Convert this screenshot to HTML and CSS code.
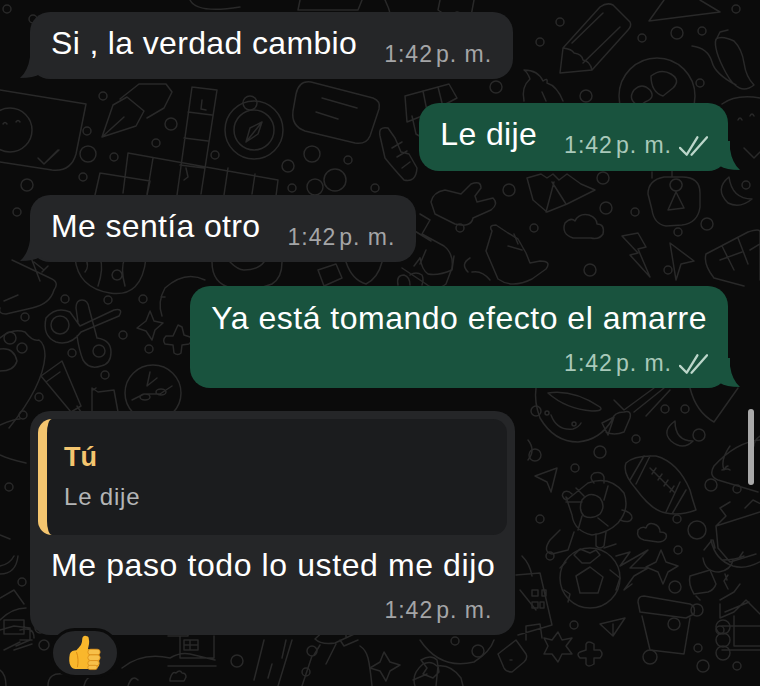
FILE: index.html
```html
<!DOCTYPE html>
<html lang="es">
<head>
    <meta charset="UTF-8">
    <meta name="viewport" content="width=device-width, initial-scale=1.0">
    <title>Chat</title>
    <link rel="stylesheet" href="styles.css">
</head>
<body>
    <div class="chat">
        <!-- wallpaper doodles -->
        <svg class="wall" viewBox="0 0 760 686" aria-hidden="true">
            <g class="dots">
                <circle cx="7" cy="9" r="4"/><circle cx="33" cy="19" r="4"/><circle cx="103" cy="96" r="4"/><circle cx="87" cy="131" r="4"/>
                <circle cx="171" cy="124" r="6"/><circle cx="156" cy="143" r="4"/><circle cx="88" cy="154" r="8"/><circle cx="114" cy="157" r="4"/>
                <circle cx="83" cy="177" r="4"/><circle cx="27" cy="185" r="6"/><circle cx="17" cy="212" r="4"/><circle cx="215" cy="155" r="4"/>
                <circle cx="312" cy="154" r="8"/><circle cx="288" cy="166" r="6"/><circle cx="348" cy="160" r="4"/><circle cx="335" cy="180" r="11"/>
                <circle cx="292" cy="188" r="4"/><circle cx="315" cy="187" r="8"/><circle cx="375" cy="188" r="4"/><circle cx="560" cy="22" r="4"/>
                <circle cx="540" cy="42" r="4"/><circle cx="642" cy="38" r="4"/><circle cx="677" cy="33" r="6"/><circle cx="702" cy="31" r="4"/>
                <circle cx="736" cy="9" r="4"/><circle cx="700" cy="83" r="4"/><circle cx="496" cy="87" r="6"/><circle cx="586" cy="96" r="6"/>
                <circle cx="509" cy="190" r="6"/><circle cx="603" cy="178" r="6"/><circle cx="606" cy="208" r="6"/><circle cx="635" cy="212" r="4"/>
                <circle cx="460" cy="228" r="4"/><circle cx="534" cy="228" r="4"/><circle cx="590" cy="270" r="6"/><circle cx="668" cy="270" r="4"/>
                <circle cx="707" cy="224" r="6"/><circle cx="678" cy="232" r="4"/><circle cx="746" cy="185" r="4"/><circle cx="65" cy="299" r="4"/>
                <circle cx="108" cy="300" r="4"/><circle cx="143" cy="299" r="4"/><circle cx="25" cy="317" r="4"/><circle cx="123" cy="335" r="4"/>
                <circle cx="72" cy="353" r="4"/><circle cx="149" cy="349" r="4"/><circle cx="105" cy="375" r="4"/><circle cx="39" cy="397" r="4"/>
                <circle cx="23" cy="415" r="4"/><circle cx="9" cy="487" r="4"/><circle cx="22" cy="582" r="4"/><circle cx="536" cy="411" r="5"/>
                <circle cx="665" cy="409" r="4"/><circle cx="685" cy="409" r="4"/><circle cx="636" cy="439" r="4"/><circle cx="699" cy="435" r="6"/>
                <circle cx="535" cy="455" r="6"/><circle cx="600" cy="452" r="6"/><circle cx="575" cy="468" r="4"/><circle cx="711" cy="485" r="6"/>
                <circle cx="737" cy="489" r="4"/><circle cx="540" cy="519" r="4"/><circle cx="677" cy="519" r="4"/><circle cx="697" cy="530" r="9"/>
                <circle cx="678" cy="550" r="4"/><circle cx="550" cy="556" r="4"/>
                <circle cx="675" cy="587" r="6"/><circle cx="697" cy="610" r="6"/><circle cx="674" cy="624" r="6"/><circle cx="698" cy="648" r="4"/>
                <circle cx="650" cy="657" r="7"/><circle cx="574" cy="625" r="4"/><circle cx="720" cy="630" r="4"/>
                <circle cx="737" cy="666" r="4"/><circle cx="703" cy="666" r="6"/><circle cx="237" cy="661" r="6"/><circle cx="312" cy="651" r="5"/>
                <circle cx="306" cy="672" r="4"/><circle cx="478" cy="651" r="6"/><circle cx="455" cy="641" r="4"/>
            </g>
            <g class="lines">
                <!-- pen nib -->
                <path d="M102 137l11-32 14-8 17 14-8 15zM102 137l22-20M120 99l19-15 27 0 6 8-8 16-17 10"/>
                <!-- crossword -->
                <path d="M192 87l25 3-16 104M192 87l-15 108M188 112l24 3M184 138l24 3M180 165l24 3M128 153l150 27-2 16M128 153l-5 40M153 158l-6 36M228 168l-4 27M255 174l-3 20M100 173l50 8-3 14M100 173l-5 22"/>
                <path d="M202 100l-1 9 5 1M186 168l2 9-4 3"/>
                <!-- compass -->
                <circle cx="254" cy="130" r="29"/><circle cx="254" cy="130" r="20"/><circle cx="250" cy="103" r="7"/>
                <path d="M262 122l-16 20 4-14zM262 122l-4 12-12 8"/>
                <!-- note -->
                <path d="M311 82l62 16q8 3 6 11l-9 27q-4 9-15 7l-50-12q-14-5-12-20l3-17q3-14 15-12zM322 98l35 10M316 112l22 7"/>
                <!-- smiley in jar -->
                <path d="M0 90l86 14-10 50q-5 18-24 16l-52-8"/>
                <circle cx="10" cy="130" r="22"/><path d="M16 122q2-3 4 0M3 124q2-3 4 0M38 158l6 6 14-14M44 164l15-14"/>
                <!-- top scraps -->
                <path d="M190 0q7 14 50 7M300 0l-2 10h60l4-10M385 0q15 30 0 64M440 0l-2 10 9 6 10-4 14 4 3-16"/>
                <path d="M649 21l71-9-20-12M649 21l15-21"/>
                <!-- pencil -->
                <path d="M560 73l3-25 37-41q7-5 13-2l17 17q2 4-2 8l-36 40zM572 43l31-30M583 63l37-36M563 48q9 1 11 5 8 1 9 7 7 1 9 10"/>
                <!-- chili -->
                <path d="M716 39q-3 10 10 34t28 12q-8-8-10-22t-10-22q-12-6-18-2zM692 46q16 2 20 16 3 12 24 23M716 40l4-8 8-2"/>
                <!-- heart smiley -->
                <circle cx="657" cy="96" r="38"/><path d="M634 90q8-8 16 0 6 8-5 12l-6 4q-12-6-5-16zM651 76q10-8 20-2 10 6 2 14l-10 8q-12-4-12-20z"/>
                <!-- flame -->
                <path d="M524 101q-3-14 6-22-2-6-6-9 14 0 19 11 5-4 4 2 10 3 16 18M542 92l4 9"/>
                <!-- grid stand -->
                <path d="M405 96l44-12 8 14-30 16-20 8zM423 91l4 20M438 87l4 16M412 116l4 18 10 6 6-30"/>
                <!-- shaka hands -->
                <path d="M388 128q-10-2-8 8l5 22q8 10 19 22 12 3 13-12l-8-14-8-2-6-14zM392 148l10-6M397 157l10-6M402 168l8-6"/>
                <path d="M445 190q-12 2-14 12l4 12 20 10q16 4 18-6l18-8q8-6 2-12l-16 4-2-6 6-8q0-8-10-4l-10 10z"/>
                <path d="M496 225q-8 0-4 6l-6 20 12 28q14 10 34 0l14-10q6-8-6-8l-10 2-4-10-8-14-10-6z"/>
                <path d="M514 234l4 10M508 246l14 4"/>
                <!-- corn -->
                <path d="M527 178l6 22 14 12 20-8 28-14-14-6-14-10-8 6-6-6-6 4-6-4zM546 212l8-30M566 204l-14-22"/>
                <!-- lock -->
                <path d="M664 177h18q18 0 18 16v14q-2 16-18 18l-16 1q-12-2-14-16l-4-16q0-14 16-17zM656 168l16 2M676 191a6 6 0 1 1 0.1 0M668 210l8-18 8 16zM652 172v6M672 170v7"/>
                <path d="M729 177q-15 12-1 26 12 6 24-4-20 0-23-22z"/>
                <!-- bottle -->
                <path d="M420 214l10 6-8 14 22 12q10 8 8 22l-6 16q-10 8-20 0l-24-16M405 225l26 16M426 250l-6 14M420 258l-6 8"/>
                <!-- cloud -->
                <path d="M573 238q-12-4-8-15 6-6 10-2 4-8 14-6 8 3 8 9 8 0 6 10-4 6-12 4z"/>
                <!-- lightning -->
                <path d="M622 236l16-3 8 14-8 2 12 28-20-22 8-2z"/>
                <!-- arrow -->
                <path d="M670 243l24 18-13 3-5 16z"/>
                <!-- window -->
                <path d="M706 254l42-22q12-4 12 0v48M706 254q-3 10 8 24l30 8M722 246l12 24M738 238l10 26M720 260l22-8M750 250l10-6"/>
                <!-- smiley behind bubble -->
                <path d="M722 104q14-10 38-6M738 120q2-4 4 0M750 116q2-4 4 0M744 148l10 10 6-6"/>
                <!-- below first row -->
                <path d="M12 260l38 18q10 4 4 12-4 14-22 18l-26 6q-8 0-6-6M30 255l10 26M18 295l-14 6M48 266l-6 6M34 262l10 8"/>
                <path d="M75 258q3 30 35 35t36-35M85 258q5 8 0 14M100 258q4 10-2 28M125 258q-5 10 0 28M117 270a5 5 0 1 0 0.1 0"/>
                <!-- scissors -->
                <circle cx="60" cy="325" r="9"/><path d="M46 318q10-12 24-6l10 14 34-16q10-2 5 6l-38 16q-10 14-25 10-14-6-10-24zM78 322l-2-14q0-8 6-8 6 0 7 8l8 30q14 2 14 14t-10 14q-12 4-18-6-4-10-6-24"/><circle cx="99" cy="351" r="6"/>
                <path d="M150 311l4 10 9 2-8 7-3 10-6-9-9-3 9-7z"/>
                <path d="M178 325l4 2 2 8 6 2q3 4-1 7l-7 1-1 8q-3 3-7 0l-1-8-8-1q-3-4 1-8l7 0z"/>
                <path d="M205 280q-20-10-40 8-8 14-3 28M165 297l-4 0"/>
                <!-- paw and tube -->
                <path d="M0 338q12-10 25-6 8 10 14 8 6 4 6 16-2 30-36 72M0 349q14-2 17 12-3 10-17 10"/>
                <circle cx="10" cy="338" r="6"/><circle cx="22" cy="348" r="5"/>
                <path d="M62 361l-21 15 30 36 10-6zM71 412l6 4 4-4-4-6M60 372l-14 10"/>
                <path d="M92 388l6 4 16-2 4 22-26 4zM96 388l-3 2"/>
                <circle cx="153" cy="393" r="28"/><path d="M132 400l12-6h16l12-8M140 397a5 3 0 1 0 10 0 5 3 0 1 0-10 0M156 392a5 3 0 1 0 10 0 5 3 0 1 0-10 0M150 372l-3 14 10-8"/>
                <!-- wide behind green -->
                <path d="M212 262q0 22 20 26t40-4q10-6 10-22M230 262q8 8 14 8 14 0 20-8"/>
                <path d="M318 270l18-6 6 14-18 8zM346 262q6 18 20 22 12-6 16-22M398 285q-2-10 6-10 6 2 6 10M410 275q6-4 12 0 2 4 0 10"/>
                <path d="M420 258q2 12 8 16 10 2 24-4l2-14M468 272q-8-8 2-14M472 272q10-2 18 8"/>
                <!-- under green bubble -->
                <path d="M536 388q-2 14 4 30 14 24 38 24 22-2 34-22 2-8 12-8 8-2 6 6l-6 14q-10 4-18 0M548 393q25-4 52 14 4 4-8 4-26-2-44-18zM551 415q6 16 22 14 6-2 8-6M602 423l12-6-6 18z"/>
                <circle cx="547" cy="413" r="2"/><circle cx="574" cy="424" r="2"/>
                <path d="M614 400l10 10 30-22M634 412l30-24-4-2M646 416l24-26"/>
                <path d="M690 388q6 24 24 34l24-34"/>
                <path d="M675 421q-14 10-4 20 12 10 22 0-18 0-18-20z"/>
                <!-- football -->
                <path d="M626 463q8-8 30-7 22 6 34 34 2 8 6 20-16 6-30 3-14-2-30-24-14-16-10-26zM644 456l-14 24M650 456l-14 28M680 482l-14 30M686 490l-14 24M650 468l24 24M656 468l-4 6M662 474l-4 6M668 480l-4 6M674 486l-4 6"/>
                <!-- turtle -->
                <path d="M566 497l2 2 20-16q22-8 36 10 6 16-6 30-10 10-26 12-18-4-20-20zM582 500q8-10 18-2 6 8 0 16-8 6-16 2-6-6-2-16zM584 496l-8-8M604 500l4-14M598 518l10 8M582 516l-4 14M566 502l16 0"/>
                <path d="M594 483q-6-6 0-10 8-2 10 4l0 6M566 500q-6-4-2-8 4-2 8 2M622 510q10 2 10 8-2 6-12 2M560 530l-10 10q-8 12 2 14l16-4 6-18M596 534l0 12q4 4 8 0l2-14"/>
                <path d="M535 476l22-8-6 24-4-10z"/>
                <path d="M644 540q-8-2-6-10 4-4 8-2 2-6 8-4 6 2 6 8 8 0 6 6-2 4-8 4z"/>
                <!-- taco -->
                <path d="M760 440q-24 2-46 26-6 10 4 14l40 12M730 446q-10 14-6 24 2-4 4-4M760 436q-6 4-6 10M722 470q6-2 8 0"/>
                <!-- bottle and banana -->
                <path d="M730 502l-10 6 6 8-10 10 2 22 12 14 26-8M716 526l44-14M745 508l8-8 8 4"/>
                <path d="M711 540q4 20 22 26 14 4 30-6M713 540l2 8M743 552l-4 6M722 560q14 0 22-4"/>
                <!-- soccer ball -->
                <circle cx="590" cy="578" r="30"/>
                <path d="M590 567l-14 9 4 17h18l5-16zM590 553l-10-4-6 6 8 8 8 0 10-8-4-5zM610 570l10 8-4 12M564 590l6 4-2 8M560 568l6-6M616 556l14-4-10 14 28-16-18 18 18 0-14 8-10 14 8-6M604 548l12-4"/>
                <path d="M661 550l5 12 12 4-10 6-5 12-5-12-12-5 10-5z"/>
                <path d="M703 558q2 14 16 14 12-2 14-12M700 600l-4-4M712 540l-8 10"/>
                <path d="M690 576l20-6 6 14q-2 6-8 8l-14 2q-6-10-4-18z"/>
                <!-- pot -->
                <path d="M638 602q0-6 6-6l46 8q6 2 4 10l-8 4-46-6zM642 616l8 34 34 4 6-36"/>
                <!-- house with logs -->
                <path d="M720 600l14-8 6-8M720 604l0 14 14-6 12-12 14 14M725 612l24-10M722 626h38M734 616v30h26M722 650h38"/>
                <circle cx="723" cy="627" r="7"/><circle cx="723" cy="640" r="7"/><circle cx="723" cy="653" r="7"/>
                <path d="M727 580l-2-6M728 575l-4 6 4 8"/>
                <!-- bottom row -->
                <path d="M600 624l25-6-12 18zM613 624l0 12"/>
                <path d="M552 640l6-8 4 8 10-2-6 8 6 8-10 0-4 8-6-8-8 0 4-8-4-8z"/>
                <path d="M580 652l6-2 0-6q2-4 8 0l0 6 6 0q4 4 0 8l-6 0 0 6q-6 4-8 0l0-6-6 0q-4-4 0-6z"/>
                <path d="M498 654l18-14 10 14q2 4-2 8l-12 10q-6 0-8-4zM510 660l2 0"/>
                <path d="M421 660l6 8-4 6 10 4 6-6-2-12q-6-6-16 0zM415 686q-4-12 8-22 8-4 14 2 14-2 24 12l2 8M438 666l-2 20M413 680l14-6"/>
                <path d="M384 652l6 10 10 3-10 6-4 10-6-10-10-3 10-6z"/>
                <path d="M346 620v18M330 625q18-10 30-2l5 6-30 14q-14 2-20-4zM340 640l4 6 14-6M360 646q6 4 8 12t4 28M320 645l-6 10M336 644l-10 20"/>
                <path d="M264 640l-10 40M292 640l-14 46M286 640l-4 18M272 664l-4 14M302 686l10-30"/>
                <path d="M180 636v22h34v-22M168 636h20v-2M122 668q20-16 48-10 10-6 20-4l25 6M168 666h48M198 650v-10h-14v10zM190 640v10M184 645h14"/>
                <path d="M170 679q2-8 6-6 4-4 6 0 4 0 4 4l-2 4h-14zM128 686q4-12 10-6M84 686q2-10 10-10M48 686q0-14 16-12"/>
                <path d="M0 630l14-4 16 2v12l-14 6M4 620h20v14H4zM20 640h12M14 650l18-6M20 630q14-4 14 8M4 650l16-8"/>
                <circle cx="40" cy="628" r="5"/><circle cx="44" cy="645" r="5"/>
                <path d="M0 670q6 4 6 16"/>
                <path d="M26 608q-14 0-26 12M0 598l14-8 10 14M0 566q10-2 14-10M0 574q16 0 18-18"/>
                <path d="M0 425q14-6 20-6M0 455q8 4 26 8M0 535l10 4"/>
                <path d="M528 440q8 10 0 20M522 556q8 8 10 20M520 590l16 20"/>
                <path d="M516 575l24-2 12 52-34 10M532 590h6v6h-6zM546 590h-4v6h4zM532 602h6v6h-6zM544 602h-4v6h4zM526 640v-14l14-2 2 14"/>
                <path d="M420 640q20 30 54 22 16-10 20-22"/>
            </g>
        </svg>

        <div class="messages">
            <div class="bubble in">
                <div class="line">
                    <span class="text">Si , la verdad cambio</span>
                    <span class="time">1:42<i class="gap"></i>p. m.</span>
                </div>
            </div>

            <div class="bubble out">
                <div class="line">
                    <span class="text">Le dije</span>
                    <span class="time">1:42<i class="gap"></i>p. m.
                        <svg class="ticks" viewBox="0 0 30 20"><path d="M1 12l7 7L19 1M13 19L29 1"/></svg>
                    </span>
                </div>
            </div>

            <div class="bubble in">
                <div class="line">
                    <span class="text">Me sentía otro</span>
                    <span class="time">1:42<i class="gap"></i>p. m.</span>
                </div>
            </div>

            <div class="bubble out tall">
                <div class="text">Ya está tomando efecto el amarre</div>
                <div class="foot">
                    <span class="time">1:42<i class="gap"></i>p. m.
                        <svg class="ticks" viewBox="0 0 30 20"><path d="M1 12l7 7L19 1M13 19L29 1"/></svg>
                    </span>
                </div>
            </div>

            <div class="bubble reply">
                <div class="quote">
                    <div class="quote-name">Tú</div>
                    <div class="quote-text">Le dije</div>
                </div>
                <div class="text">Me paso todo lo usted me dijo</div>
                <div class="foot">
                    <span class="time">1:42<i class="gap"></i>p. m.</span>
                </div>
            </div>

            <div class="reaction">
                <svg class="thumb" viewBox="0 0 34 38">
                    <path class="thumb-skin" d="M18 1c-3-1-4 2-4 4 0 5-3 8-6 11-3 0-6 1-7 4-1 5-1 10 1 13 2 3 5 3 8 3h14c4 0 7-1 8-4V16c-3-1-8-1-12-1 1-4 2-7 1-11 0-2-1-3-3-3z"/>
                    <path class="thumb-fold" d="M22 17h9M22 23h9M22 29h8M8 18c2 5 2 11 1 16"/>
                    <rect class="thumb-nail" x="20" y="15" width="13" height="6" rx="3"/>
                    <rect class="thumb-nail" x="20" y="21" width="13" height="6" rx="3"/>
                    <rect class="thumb-nail" x="20" y="27" width="12" height="5.5" rx="2.7"/>
                    <rect class="thumb-nail" x="20" y="32" width="10" height="4.5" rx="2.2"/>
                </svg>
            </div>
        </div>

        <div class="scrollbar"></div>
    </div>
</body>
</html>
```

FILE: styles.css
```css
* {
    box-sizing: border-box;
    margin: 0;
    padding: 0;
}

body {
    background: #0b0b0b;
    font-family: "Liberation Sans", Arial, sans-serif;
    color: #fff;
}

.chat {
    position: relative;
    width: 760px;
    height: 686px;
    overflow: hidden;
}

.wall {
    position: absolute;
    top: 0;
    left: 0;
    width: 760px;
    height: 686px;
}

.wall circle,
.wall path {
    fill: none;
    stroke: #292929;
    stroke-width: 1.5;
    stroke-linecap: round;
    stroke-linejoin: round;
}

.messages {
    position: relative;
    display: flex;
    flex-direction: column;
    align-items: flex-start;
    padding: 12px 32px 0 30px;
}

.bubble {
    position: relative;
    height: 67px;
    padding: 0 21px;
    border-radius: 20px;
    background: #252628;
    margin-bottom: 24px;
}

.bubble::after {
    content: "";
    position: absolute;
    bottom: 0;
    left: -10px;
    width: 40px;
    height: 30px;
    background: inherit;
    clip-path: path("M10 0L10 8Q8 22 0 29Q14 29 20 25Q26 30 40 30L40 0Z");
}

.out {
    align-self: flex-end;
    background: #19533e;
    height: 68px;
}

.out::after {
    left: auto;
    right: -12px;
    transform: scaleX(-1);
}

.tall {
    height: 102px;
    margin-bottom: 23px;
}

.line {
    position: relative;
    z-index: 1;
    display: flex;
    align-items: baseline;
    gap: 27px;
    padding-top: 13px;
}

.text {
    position: relative;
    z-index: 1;
    font-size: 32px;
    line-height: 36px;
    letter-spacing: 0.35px;
    white-space: nowrap;
}

.tall > .text {
    letter-spacing: 0.5px;
}

.reply > .text {
    letter-spacing: 0.6px;
}

.tall > .text {
    padding-top: 14px;
}

.time {
    display: inline-flex;
    align-items: center;
    font-size: 23px;
    letter-spacing: 1px;
    color: #a4a5a7;
    white-space: nowrap;
    transform: translateY(8px);
}

.gap {
    width: 3px;
}

.out .time {
    color: #a9c9ba;
}

.ticks {
    width: 29px;
    height: 20px;
    margin-left: 7px;
    margin-right: -1px;
}

.ticks path {
    fill: none;
    stroke: #bcd6ca;
    stroke-width: 2.4;
    stroke-linecap: round;
    stroke-linejoin: round;
}

.foot {
    position: relative;
    z-index: 1;
    display: flex;
    justify-content: flex-end;
    padding-top: 6px;
}

.reply {
    height: 224px;
    margin-bottom: 0;
    padding: 8px 8px 0;
}

.reply::after {
    display: none;
}

.reply > .text {
    padding: 12px 12px 0 13px;
}

.reply > .foot {
    padding: 6px 15px 0 0;
}

.quote {
    height: 116px;
    padding: 22px 0 0 17px;
    border-left: 9px solid #f4c56f;
    border-radius: 14px;
    background: #1b1c1e;
}

.quote-name {
    font-size: 27px;
    line-height: 32px;
    font-weight: bold;
    color: #f4c56f;
}

.quote-text {
    margin-top: 10px;
    font-size: 24px;
    line-height: 28px;
    letter-spacing: 0.8px;
    color: #b4b5b6;
}

.reaction {
    position: relative;
    display: flex;
    align-items: center;
    justify-content: center;
    width: 70px;
    height: 50px;
    margin: -7px 0 0 20px;
    border: 3px solid #0b0b0b;
    border-radius: 25px;
    background: #252628;
}

.thumb {
    width: 34px;
    height: 36px;
}

.thumb-skin {
    fill: #f9b72c;
}

.thumb-fold {
    fill: none;
    stroke: #d98a12;
    stroke-width: 1;
}

.thumb-nail {
    fill: #f7c04a;
    stroke: #d98a12;
    stroke-width: 0.8;
}

.scrollbar {
    position: absolute;
    top: 409px;
    left: 748px;
    width: 6px;
    height: 76px;
    border-radius: 3px;
    background: #a9a9a9;
}
```
